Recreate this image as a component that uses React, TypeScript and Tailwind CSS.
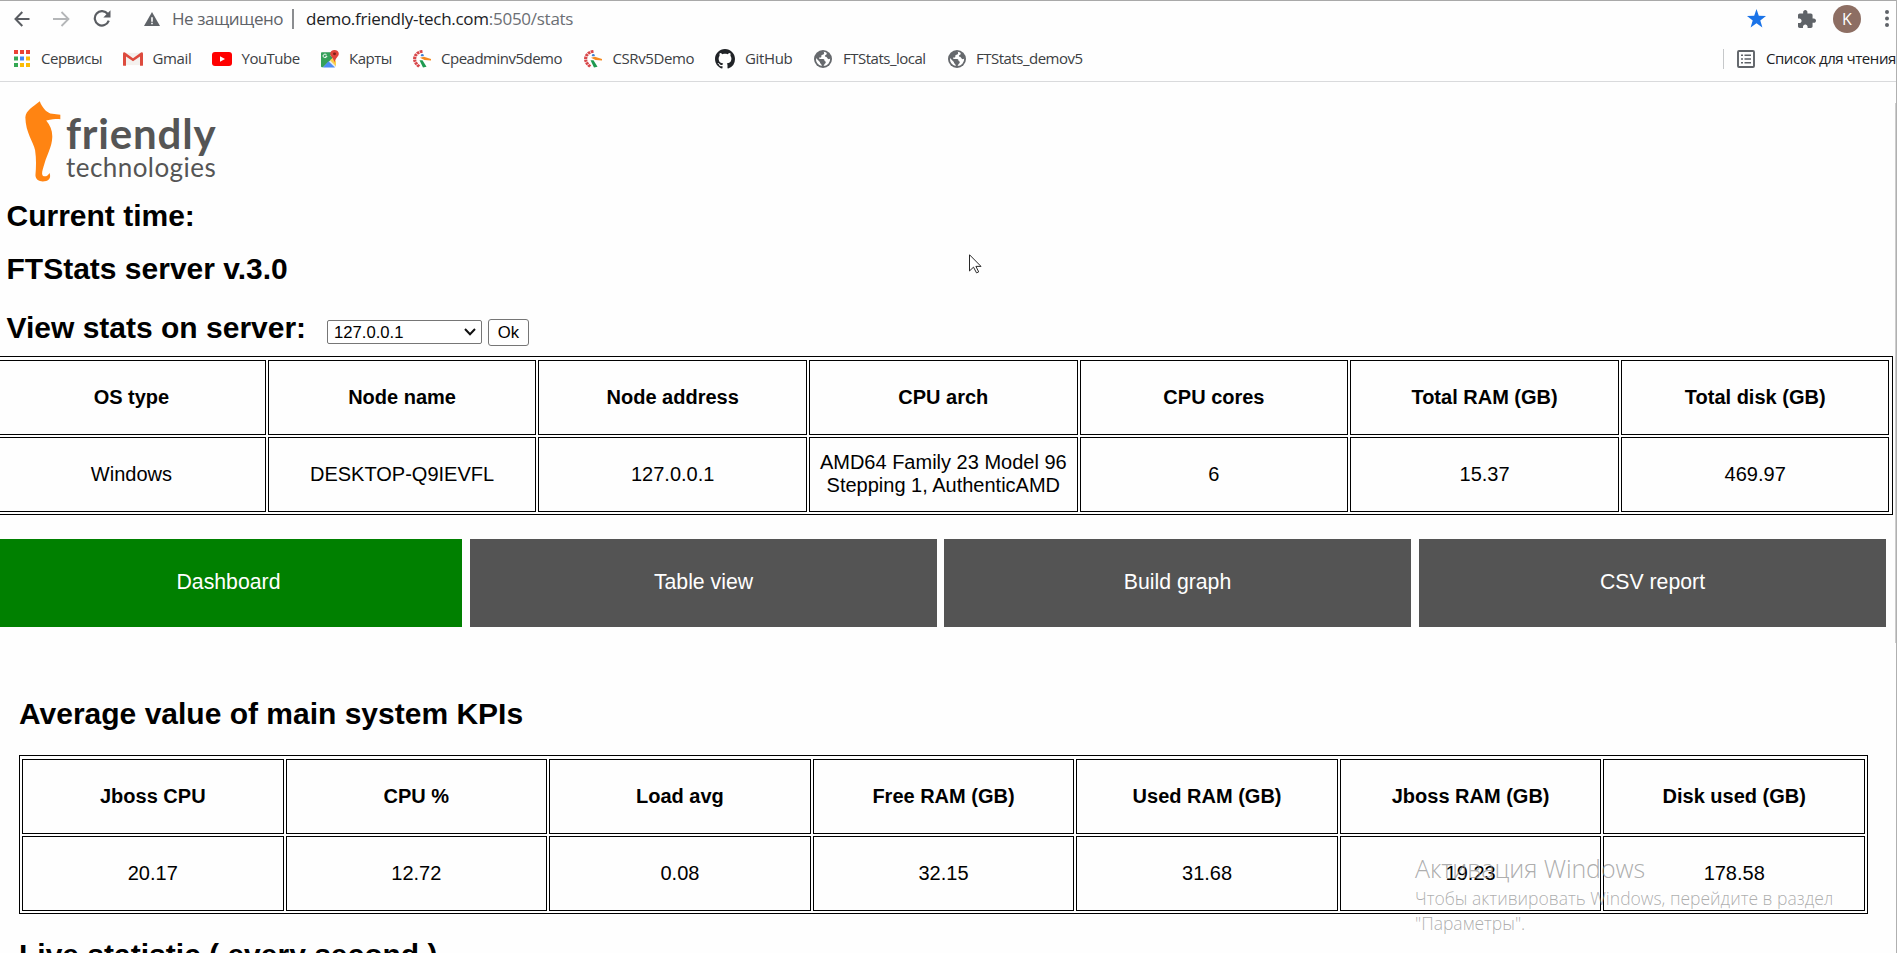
import React from 'react';

const SEGOE = "font-['Open_Sans','Noto_Sans',sans-serif]";

function AppsIcon() {
  const c = ['#ea4335', '#ea4335', '#ea4335', '#34a853', '#4285f4', '#fbbc04', '#34a853', '#fbbc04', '#fbbc04'];
  return (
    <svg width="16" height="17" viewBox="0 0 16 17" className="shrink-0">
      {c.map((f, i) => (
        <rect key={i} x={(i % 3) * 6} y={Math.floor(i / 3) * 6.5} width="4" height="4" fill={f} />
      ))}
    </svg>
  );
}

function GmailIcon() {
  return (
    <svg width="20" height="14" viewBox="0 0 20 16" preserveAspectRatio="none" className="shrink-0">
      <path d="M2 1h16v14H2z" fill="#f4f1ee" />
      <path d="M0 2q0-2 2-1.500L10 7l8-6.500q2-.5 2 1.500v13q0 .8-1 .8h-2V5l-7 5.500L3 5v10.800H1q-1 0-1-.8z" fill="#dd4b3e" />
    </svg>
  );
}

function YouTubeIcon() {
  return (
    <svg width="20" height="14" viewBox="0 0 20 14" className="shrink-0">
      <rect width="20" height="14" rx="3" fill="#f00" />
      <path d="M8 4.200l5 2.800-5 2.800z" fill="#fff" />
    </svg>
  );
}

function MapsIcon() {
  return (
    <svg width="18" height="18" viewBox="0 0 18 21" preserveAspectRatio="none" className="shrink-0">
      <rect x="0" y="2.500" width="15" height="17.500" rx="1" fill="#e8eaed" />
      <path d="M1 2.500h12L0 16V3.500q0-1 1-1z" fill="#34a05a" />
      <path d="M0 15L9 6l3 3L2 20H1q-1 0-1-1z" fill="#34a05a" />
      <path d="M9 12l3-3 3 4v6z" fill="#fbd04a" />
      <path d="M2 20.500l5.500-7.500 6.500 7.500z" fill="#4c8bf5" />
      <path d="M5.600 5.600A2 2 0 1 0 6 7.300H4.300" fill="none" stroke="#fff" strokeWidth="1" />
      <path d="M13.500 0a4.300 4.300 0 0 1 4.300 4.400c0 3.500-3.600 4.600-4.300 10.600-.7-6-4.300-7.100-4.300-10.600A4.300 4.300 0 0 1 13.500 0z" fill="#e0443a" />
      <circle cx="13.500" cy="4.500" r="1.500" fill="#7d1f18" />
    </svg>
  );
}

function BirdIcon() {
  return (
    <svg width="18" height="18" viewBox="0 0 18 21" preserveAspectRatio="none" className="shrink-0">
      <path d="M9.500 1.500C3 2.500 0 9 2.500 14.500q1.500 3 4 5" fill="none" stroke="#d8474a" strokeWidth="3.200" strokeDasharray="2.700 .7" />
      <circle cx="9.300" cy="6" r="1.400" fill="#3f7fd0" />
      <path d="M7 9l4-1.200 7 2.700v1.700l-6.500-.4z" fill="#f58a1f" />
      <path d="M6.500 12l3 0 4 7.500-3.500 1z" fill="#1d9a50" />
    </svg>
  );
}

function GitHubIcon() {
  return (
    <svg width="20" height="20" viewBox="0 0 16 16" className="shrink-0">
      <path fill="#202327" d="M8 0C3.580 0 0 3.580 0 8c0 3.540 2.290 6.530 5.470 7.590.4.070.55-.17.55-.38 0-.19-.01-.82-.01-1.490-2.010.37-2.530-.49-2.690-.94-.09-.23-.48-.94-.82-1.130-.28-.15-.68-.52-.01-.53.63-.01 1.080.58 1.230.82.72 1.210 1.870.87 2.330.66.07-.52.28-.87.51-1.070-1.780-.2-3.640-.89-3.640-3.950 0-.87.31-1.590.82-2.150-.08-.2-.36-1.020.08-2.120 0 0 .67-.21 2.200.82.64-.18 1.320-.27 2-.27s1.360.09 2 .27c1.530-1.040 2.200-.82 2.200-.82.44 1.100.16 1.920.08 2.120.51.56.82 1.270.82 2.150 0 3.070-1.870 3.750-3.650 3.950.29.25.54.73.54 1.480 0 1.070-.01 1.930-.01 2.200 0 .21.15.46.55.38A8.010 8.010 0 0 0 16 8c0-4.420-3.580-8-8-8z" />
    </svg>
  );
}

function GlobeIcon() {
  return (
    <svg width="18" height="18" viewBox="2 2 20 20" className="shrink-0">
      <circle cx="12" cy="12" r="10" fill="#66696d" />
      <path fill="#fff" d="M12.500 4c1 .8 1 1.800.3 2.600-.7.700-1.900.6-2.500 1.100-.5.600.3 1.700-.4 2.300-.6.500-1.600.1-2.200.7-.4.600.2 1.300.9 1.300h3.600c1.300 0 1.400 1 1.500 2 .2.700 1 .6 1.300 1.100.4.900-.4 1.700-1 2.300-.6.700-.7 1.700-1.500 2.500A8 8 0 0 0 20 11.500c-.7.500-1.500.9-2.300.5-.9-.5-1-1.700-1.900-2.200-.6-.4-1.600-.3-1.700-1.100 0-1.100 1.400-1.200 1.900-2 .3-.5.200-1.200-.2-1.700A8 8 0 0 0 12.500 4zM4.200 11A8 8 0 0 0 10.500 19.800c.2-1.100-.3-1.800-1-2.500-.7-.6-1-1.300-1-2.100z" />
    </svg>
  );
}

const bookmarks = [
  { icon: <AppsIcon />, label: 'Сервисы', box: 'ml-[14px] w-[109px]', gap: 'w-[27px]', track: 'tracking-[-0.4px]' },
  { icon: <GmailIcon />, label: 'Gmail', box: 'w-[89px]', gap: 'w-[29.500px]', track: 'tracking-[-0.35px]' },
  { icon: <YouTubeIcon />, label: 'YouTube', box: 'w-[109px]', gap: 'w-[29.500px]', track: 'tracking-[-0.5px]' },
  { icon: <MapsIcon />, label: 'Карты', box: 'w-[92px]', gap: 'w-[28px]', track: 'tracking-[-0.5px]' },
  { icon: <BirdIcon />, label: 'Cpeadminv5demo', box: 'w-[171px]', gap: 'w-[28px]', track: 'tracking-[-0.5px]' },
  { icon: <BirdIcon />, label: 'CSRv5Demo', box: 'w-[131px]', gap: 'w-[28.500px]', track: 'tracking-[-0.4px]' },
  { icon: <GitHubIcon />, label: 'GitHub', box: 'w-[99px]', gap: 'w-[30px]', track: 'tracking-[-0.35px]' },
  { icon: <GlobeIcon />, label: 'FTStats_local', box: 'w-[134px]', gap: 'w-[29px]', track: 'tracking-[-0.5px]' },
  { icon: <GlobeIcon />, label: 'FTStats_demov5', box: 'w-[140px]', gap: 'w-[28px]', track: 'tracking-[-0.5px]' },
];

function BrowserBar() {
  return (
    <header className={`h-[82px] border-t border-b border-t-[#a9a9a9] border-b-[#d9dadc] ${SEGOE}`}>
      <div className="flex h-[35px] items-center">
        <svg width="16" height="16" viewBox="0 0 16 16" className="ml-[14px]" fill="none" stroke="#5a5d62" strokeWidth="2">
          <path d="M15.500 8H1.500M8.300 1L1.500 8l6.800 7" />
        </svg>
        <svg width="17" height="16" viewBox="0 0 17 16" className="ml-[23px]" fill="none" stroke="#b4b6b8" strokeWidth="1.800">
          <path d="M0 8h15M8.500 1l7 7-7 7" />
        </svg>
        <svg width="18" height="17" viewBox="0 0 18 17" className="ml-[23px]" fill="none" stroke="#5a5d62" strokeWidth="2.200">
          <path d="M14.800 4A7.200 7.200 0 1 0 15.800 10.700" />
          <path d="M17.500 .3v7.200h-7.200z" fill="#5a5d62" stroke="none" />
        </svg>
        <svg width="16" height="14" viewBox="0 0 16 16" preserveAspectRatio="none" className="ml-[33px]">
          <path d="M8 0l8 16H0z" fill="#5f6368" />
          <path d="M7.200 6h1.600v5H7.200zM7.200 12.200h1.600v1.700H7.200z" fill="#fff" />
        </svg>
        <div className="ml-[12px] w-[120px] text-[17px] tracking-[-0.45px] whitespace-nowrap text-[#5f6368]">Не защищено</div>
        <div className="h-[20px] w-[2px] bg-[#8b8d90]" />
        <div className="ml-[12px] text-[17px] tracking-[-0.27px] whitespace-nowrap text-[#202124]">
          demo.friendly-tech.com<span className="text-[#6b6f74]">:5050/stats</span>
        </div>
        <div className="ml-auto flex items-center">
          <svg width="19" height="19" viewBox="0 0 19 19" className="mr-[32px]">
            <path d="M9.500 0l2.300 6.800 7.200.2-5.700 4.400 2.100 7.100-5.900-4.200-5.900 4.200 2.100-7.100L0 7l7.200-.2z" fill="#1a73e8" />
          </svg>
          <svg width="18" height="18" viewBox="2 1 21 21" className="mr-[17px]">
            <path fill="#5f6368" d="M20.500 11H19V7c0-1.100-.9-2-2-2h-4V3.500C13 2.120 11.880 1 10.500 1S8 2.120 8 3.500V5H4c-1.100 0-1.990.9-1.990 2v3.800H3.500c1.490 0 2.700 1.210 2.700 2.700s-1.210 2.700-2.700 2.700H2V20c0 1.100.9 2 2 2h3.800v-1.500c0-1.490 1.210-2.700 2.700-2.700 1.490 0 2.700 1.210 2.700 2.700V22H17c1.100 0 2-.9 2-2v-4h1.500c1.380 0 2.500-1.120 2.500-2.500S21.880 11 20.500 11z" />
          </svg>
          <div className="flex h-[28px] w-[28px] items-center justify-center rounded-full bg-[#8d6e63] text-[16px] text-white">K</div>
          <svg width="4" height="17" viewBox="0 0 4 17" className="mr-[8px] ml-[24px]" fill="#5f6368">
            <circle cx="2" cy="2" r="2" /><circle cx="2" cy="8.500" r="2" /><circle cx="2" cy="15" r="2" />
          </svg>
        </div>
      </div>
      <nav className="flex h-[45px] items-center text-[15px] text-[#3c4043]">
        {bookmarks.map((b) => (
          <div key={b.label} className={`flex shrink-0 items-center ${b.box}`}>
            <div className={`flex shrink-0 ${b.gap}`}>{b.icon}</div>
            <span className={`whitespace-nowrap ${b.track}`}>{b.label}</span>
          </div>
        ))}
        <div className="ml-auto flex items-center">
          <div className="h-[20px] w-px bg-[#c6c8ca]" />
          <svg width="18" height="18" viewBox="0 0 18 18" className="ml-[13px]" fill="none" stroke="#5f6368" strokeWidth="1.900">
            <rect x="1" y="1" width="16" height="16" rx="1" />
            <path d="M4 5.200h2M7.500 5.200h6.500M4 9h2M7.500 9h6.500M4 12.800h2M7.500 12.800h6.500" strokeWidth="1.600" />
          </svg>
          <div className="ml-[11px] w-[131px] tracking-[-0.45px] whitespace-nowrap text-[#202124]">Список для чтения</div>
        </div>
      </nav>
    </header>
  );
}

function Logo() {
  return (
    <div className="flex h-[82px] items-start pl-[25px]">
      <svg width="36" height="81" viewBox="75 50 107 240" preserveAspectRatio="none">
        <path fill="#ff8412" d="M119 51C124 66 136 82 150 87L180 91V104C168 103 160 104 138 108C150 122 157 138 156 158C155 185 142 205 133 235C128 252 122 266 129 272C136 276 144 270 148 263C152 275 149 284 138 287C122 291 107 286 106 270C108 245 109 222 105 196C100 170 77 145 76 98C78 78 98 68 119 51Z" />
      </svg>
      <div className="flex flex-col pt-[11px] pl-[5px] font-['Lato',sans-serif] text-[#555]">
        <div className="h-[42px] text-[42px] leading-[42px] font-bold tracking-[0.8px]">friendly</div>
        <div className="h-[26px] text-[26px] leading-[26px] tracking-[0.45px]">technologies</div>
      </div>
    </div>
  );
}

function Cell({ children, head }: { children: React.ReactNode; head?: boolean }) {
  return (
    <div className={`flex h-[75px] items-center justify-center border border-black text-center text-[20px] leading-[23px] whitespace-nowrap ${head ? 'font-bold' : ''}`}>
      <div>{children}</div>
    </div>
  );
}

const system: [string, React.ReactNode][] = [
  ['OS type', 'Windows'],
  ['Node name', 'DESKTOP-Q9IEVFL'],
  ['Node address', '127.0.0.1'],
  ['CPU arch', <div className="pb-[2px]">AMD64 Family 23 Model 96<br />Stepping 1, AuthenticAMD</div>],
  ['CPU cores', '6'],
  ['Total RAM (GB)', '15.37'],
  ['Total disk (GB)', '469.97'],
];

const kpis: [string, React.ReactNode][] = [
  ['Jboss CPU', '20.17'],
  ['CPU %', '12.72'],
  ['Load avg', '0.08'],
  ['Free RAM (GB)', '32.15'],
  ['Used RAM (GB)', '31.68'],
  ['Jboss RAM (GB)', '19.23'],
  ['Disk used (GB)', '178.58'],
];

function StatTable({ rows, className }: { rows: [string, React.ReactNode][]; className: string }) {
  return (
    <div className={`grid grid-cols-7 gap-[2px] border border-black px-[2px] pt-[3px] pb-[2px] ${className}`}>
      {rows.map((r) => <Cell key={r[0]} head>{r[0]}</Cell>)}
      {rows.map((r) => <Cell key={r[0]}>{r[1]}</Cell>)}
    </div>
  );
}

const H = 'text-[30px] leading-[36px] font-bold whitespace-nowrap';

export default function App() {
  return (
    <div className="relative h-[953px] w-[1897px] overflow-hidden bg-[#fefefe] font-['Liberation_Sans',Arial,sans-serif] text-black">
      <BrowserBar />
      <main>
        <div className="h-[116px] pt-[19px]"><Logo /></div>
        <h2 className={`h-[53px] pl-[6.500px] ${H}`}>Current time:</h2>
        <h2 className={`h-[59px] pl-[6.500px] ${H}`}>FTStats server v.3.0</h2>
        <div className="flex h-[46px] pl-[6.500px]">
          <h2 className={`w-[320.500px] ${H}`}>View stats on server:</h2>
          <div className="mt-[10px] flex h-[24px] w-[155px] items-center justify-between rounded-[2px] border border-[#767676] bg-white pr-[5px] pl-[6px] text-[16.670px]">
            <span>127.0.0.1</span>
            <svg width="12" height="8" viewBox="0 0 12 8" fill="none" stroke="#111" strokeWidth="2"><path d="M1 1l5 5.200L11 1" /></svg>
          </div>
          <button className="mt-[9px] ml-[6px] flex h-[27px] w-[41px] items-center justify-center rounded-[3px] border border-[#767676] bg-white text-[16.670px]">Ok</button>
        </div>
        <StatTable rows={system} className="ml-[-5.900px] w-[1898.400px]" />
        <div className="mt-[24px] -ml-[5px] flex h-[88px] text-[21.250px] text-white">
          <div className="flex w-[467px] items-center justify-center bg-[#008000] pb-[1px]">Dashboard</div>
          <div className="ml-[8px] flex w-[467px] items-center justify-center bg-[#545454] pb-[1px]">Table view</div>
          <div className="ml-[7px] flex w-[467px] items-center justify-center bg-[#545454] pb-[1px]">Build graph</div>
          <div className="ml-[8px] flex w-[467px] items-center justify-center bg-[#545454] pb-[1px]">CSV report</div>
        </div>
        <h2 className={`mt-[69px] h-[59px] pl-[19px] ${H}`}>Average value of main system KPIs</h2>
        <StatTable rows={kpis} className="ml-[19px] w-[1849px]" />
        <h2 className={`mt-[23px] pl-[19px] ${H}`}>Live statistic ( every second )</h2>
      </main>
      <svg width="13" height="20" viewBox="0 0 13 21" preserveAspectRatio="none" className="absolute top-[254px] left-[969px]">
        <path d="M.5 .8v17l4-4 3 6 2.200-1-2.800-5.800H12z" fill="#fff" stroke="#222" strokeWidth="1" />
      </svg>
      <div className={`absolute top-[851px] left-[1415px] font-light whitespace-nowrap text-[#8a8a8a]/70 ${SEGOE}`}>
        <div className="text-[25px] leading-[35px] tracking-[-0.1px]">Активация Windows</div>
        <div className="text-[17.500px] leading-[25px]">Чтобы активировать Windows, перейдите в раздел</div>
        <div className="text-[17.500px] leading-[25px]">"Параметры".</div>
      </div>
      <div className="absolute top-[103px] right-px h-[540px] w-px bg-[#cdcdcd]" />
      <div className="absolute top-0 right-0 h-full w-px bg-[#b0b0b0]" />
    </div>
  );
}
